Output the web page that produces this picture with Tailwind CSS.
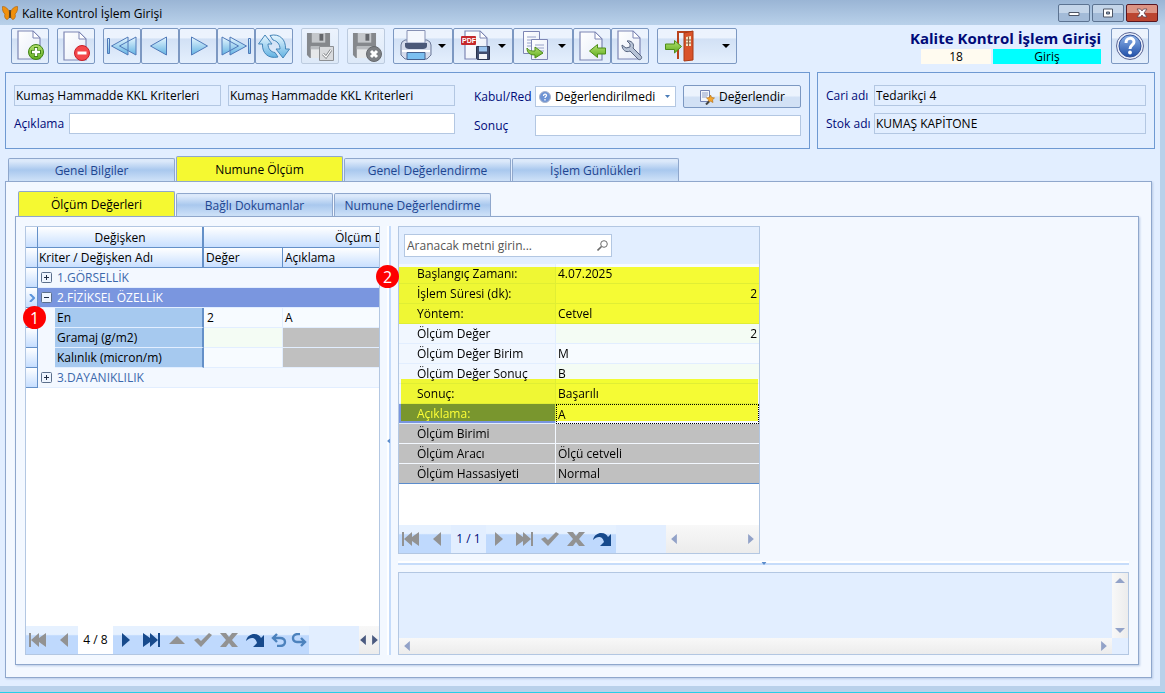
<!DOCTYPE html>
<html lang="tr">
<head>
    <meta charset="UTF-8">
    <meta name="viewport" content="width=device-width, initial-scale=1.0">
    <title>Kalite Kontrol İşlem Girişi</title>
    <script src="https://cdn.jsdelivr.net/npm/@tailwindcss/browser@4"></script>
</head>
<body class="flex min-h-screen flex-col bg-[#e2eeff] font-['Open_Sans','Noto_Sans',sans-serif] text-xs text-black">

    <!-- shared icon parts -->
    <svg class="absolute h-0 w-0" aria-hidden="true">
        <defs>
            <linearGradient id="blue" x1="0" y1="0" x2="0" y2="1"><stop offset="0" stop-color="#e8f7ff"/><stop offset="1" stop-color="#62b2e2"/></linearGradient>
            <linearGradient id="green" x1="0" y1="0" x2="0" y2="1"><stop offset="0" stop-color="#b4e070"/><stop offset="1" stop-color="#5fae20"/></linearGradient>
            <linearGradient id="paper" x1="0" y1="0" x2="1" y2="1"><stop offset="0" stop-color="#ffffff"/><stop offset="1" stop-color="#e6ecf8"/></linearGradient>
            <linearGradient id="help" x1="0" y1="0" x2="0" y2="1"><stop offset="0" stop-color="#8fb4ea"/><stop offset="1" stop-color="#1f4fa8"/></linearGradient>
            <symbol id="doc" viewBox="0 0 24 30"><path d="M1 1h15l7 7v21H1z" fill="url(#paper)" stroke="#7d86b4" stroke-width="1.2"/><path d="M16 1v7h7z" fill="#fff" stroke="#7d86b4"/></symbol>
            <symbol id="floppy" viewBox="0 0 26 28"><path d="M1 1h24v26H4l-3-3z" fill="#85888c"/><path d="M6 1h14v10H6z" fill="#c4c7cb"/><path d="M14 2h4v7h-4z" fill="#63666b"/><path d="M5 15h16v12H5z" fill="#e6e8ea"/><path d="M5 15h16v3H5z" fill="#b9bcc0"/></symbol>
            <symbol id="first" viewBox="0 0 18 14"><path d="M0 0h2v14H0zM10 0v5l7-5v14l-7-5v5L2 7z"/></symbol>
            <symbol id="last" viewBox="0 0 18 14"><path d="M18 0h-2v14h2zM8 0v5L1 0v14l7-5v5l8-7z"/></symbol>
            <symbol id="prev" viewBox="0 0 8 14"><path d="M8 0v14L0 7z"/></symbol>
            <symbol id="next" viewBox="0 0 8 14"><path d="M0 0v14l8-7z"/></symbol>
            <symbol id="up" viewBox="0 0 16 8"><path d="M8 0l8 8H0z"/></symbol>
            <symbol id="check" viewBox="0 0 18 14"><path d="M0 7l4-2 3 3 8-8 3 2L7 14z"/></symbol>
            <symbol id="cross" viewBox="0 0 18 14"><path d="M0 0h6l3 4 3-4h6l-6 7 6 7h-6l-3-4-3 4H0l6-7z"/></symbol>
            <symbol id="jump" viewBox="0 0 18 13"><path d="M0 7C1 2 5 0 8 0c4 0 6 2 7 4l3-3v12H7l4-4C10 5 8 4 6 4 4 4 2 5 0 7z"/></symbol>
            <symbol id="undo" viewBox="0 0 16 14"><path d="M6 1L2 5l4 4M2 5h7c3 0 5 1 5 4s-2 4-5 4H6" fill="none" stroke-width="2.4"/></symbol>
            <symbol id="redo" viewBox="0 0 16 14"><path d="M10 5l4 4-4 4M14 9H6C3 9 2 7 2 5s2-4 5-4h2" fill="none" stroke-width="2.4"/></symbol>
        </defs>
    </svg>

    <!-- title bar -->
    <header class="flex h-[25px] items-center gap-1 bg-linear-to-b from-[#9ab5d5] to-[#b9d1ea] pr-[7px] pl-[2px]">
        <svg class="h-4 w-4" viewBox="0 0 16 16"><path d="M7.500 8C7 4 3 1 .5 1.500 0 4 1 8 3 9c-1 2 0 5 2 5.500 2 0 2.500-4 2.500-6.500zM8.500 8C9 4 13 1 15.500 1.500 16 4 15 8 13 9c1 2 0 5-2 5.500-2 0-2.500-4-2.500-6.500z" fill="#f0900c" stroke="#a85c08" stroke-width=".6"/><path d="M8 5v8" stroke="#3c2608" stroke-width="1.400"/></svg>
        <h1 class="flex-1 pt-[2px]">Kalite Kontrol İşlem Girişi</h1>
        <div class="flex gap-[2px]">
            <button aria-label="Simge durumuna küçült" class="flex h-[18px] w-8 items-center justify-center rounded-xs border border-[#5c7391] bg-linear-to-b from-[#c4d5e9] from-50% to-[#a3bbd8] to-50%"><svg class="h-3 w-3" viewBox="0 0 12 12"><path d="M1 5.500h10v3H1z" fill="#fff" stroke="#4d5565"/></svg></button>
            <button aria-label="Ekranı kapla" class="flex h-[18px] w-8 items-center justify-center rounded-xs border border-[#5c7391] bg-linear-to-b from-[#c4d5e9] from-50% to-[#a3bbd8] to-50%"><svg class="h-3 w-3" viewBox="0 0 12 12"><path d="M1.500 2h9v8h-9z" fill="#fff" stroke="#4d5565"/><path d="M4.500 5h3v2h-3z" fill="#8ea6c5" stroke="#4d5565"/></svg></button>
            <button aria-label="Kapat" class="flex h-[18px] w-8 items-center justify-center rounded-xs border border-[#5a1620] bg-linear-to-b from-[#dc9484] from-50% to-[#bb4530] to-50%"><svg class="h-3 w-3" viewBox="0 0 12 12"><path d="M1 2h3.500L6 4l1.500-2H11L8 6l3 4H7.500L6 8l-1.500 2H1l3-4z" fill="#fff" stroke="#5c4450" stroke-width=".8"/></svg></button>
        </div>
    </header>

    <div class="flex flex-1 flex-col border-r-[5px] border-b-[6px] border-[#b9d1ea]">
        <!-- toolbar -->
        <div class="flex items-start justify-between pt-[3px] pr-[11px] pl-[11px]">
            <div class="flex gap-2">
                <button aria-label="Yeni" class="h-9 w-[38px] rounded-xs border border-[#7c98c2] bg-linear-to-b from-[#ecf3fd] from-25% via-[#d2e1f5] via-30% to-[#e4effd]">
                    <svg class="h-[34px] w-9" viewBox="1 1 36 34"><use href="#doc" x="6" y="2" width="24" height="30"/><circle cx="25" cy="24" r="7.500" fill="url(#green)" stroke="#3f8214"/><path d="M25 19v10M20 24h10" stroke="#3f8214" stroke-width="4"/><path d="M25 20v8M21 24h8" stroke="#fff" stroke-width="2.400"/></svg>
                </button>
                <button aria-label="Sil" class="h-9 w-[38px] rounded-xs border border-[#7c98c2] bg-linear-to-b from-[#ecf3fd] from-25% via-[#d2e1f5] via-30% to-[#e4effd]">
                    <svg class="h-[34px] w-9" viewBox="1 1 36 34"><use href="#doc" x="6" y="3" width="24" height="30"/><circle cx="25" cy="25" r="7.500" fill="#f4474b" stroke="#c81e26"/><path d="M20.500 25h9" stroke="#fff" stroke-width="3"/></svg>
                </button>
                <div class="flex">
                    <button aria-label="İlk kayıt" class="h-9 w-[38px] rounded-xs border border-[#7c98c2] bg-linear-to-b from-[#ecf3fd] from-25% via-[#d2e1f5] via-30% to-[#e4effd]">
                        <svg class="h-[34px] w-9" viewBox="1 1 36 34" fill="url(#blue)" stroke="#4f79b8"><path d="M4.500 10.500h2v15h-2zM25 9v18L8.500 18zM33 9v18L16.500 18z"/></svg>
                    </button>
                    <button aria-label="Önceki kayıt" class="h-9 w-[38px] rounded-xs border border-[#7c98c2] bg-linear-to-b from-[#ecf3fd] from-25% via-[#d2e1f5] via-30% to-[#e4effd]">
                        <svg class="h-[34px] w-9" viewBox="1 1 36 34" fill="url(#blue)" stroke="#4f79b8"><path d="M25.500 9v18L9.500 18z"/></svg>
                    </button>
                    <button aria-label="Sonraki kayıt" class="h-9 w-[38px] rounded-xs border border-[#7c98c2] bg-linear-to-b from-[#ecf3fd] from-25% via-[#d2e1f5] via-30% to-[#e4effd]">
                        <svg class="h-[34px] w-9" viewBox="1 1 36 34" fill="url(#blue)" stroke="#4f79b8"><path d="M12.500 9v18l16-9z"/></svg>
                    </button>
                    <button aria-label="Son kayıt" class="h-9 w-[38px] rounded-xs border border-[#7c98c2] bg-linear-to-b from-[#ecf3fd] from-25% via-[#d2e1f5] via-30% to-[#e4effd]">
                        <svg class="h-[34px] w-9" viewBox="1 1 36 34" fill="url(#blue)" stroke="#4f79b8"><path d="M31.500 10.500h2v15h-2zM5 9v18l16.500-9zM13 9v18l16.500-9z"/></svg>
                    </button>
                    <button aria-label="Yenile" class="h-9 w-[38px] rounded-xs border border-[#7c98c2] bg-linear-to-b from-[#ecf3fd] from-25% via-[#d2e1f5] via-30% to-[#e4effd]">
                        <svg class="h-[34px] w-9" viewBox="1 1 36 34" fill="url(#blue)" stroke="#4585b8"><path d="M10 7l7 9h-4c0 5 3 8 7 8.500l3 4.500C13 31 7 25 7.500 16H3.500z"/><path d="M28 30l-7-9h4c0-5-3-8-7-9l-3-4.500C25 5 31 12 30.500 21h4z"/></svg>
                    </button>
                </div>
                <button aria-label="Kaydet" disabled class="h-9 w-[38px] rounded-xs border border-[#bccbdf] bg-linear-to-b from-[#ecf3fd] to-[#dde9f8]">
                    <svg class="h-[34px] w-9" viewBox="1 1 36 34"><use href="#floppy" x="5" y="4" width="25" height="27"/><path d="M18.500 18.500h14v14h-14z" fill="#d9dbde" stroke="#8d9094"/><path d="M22 26l3 3 5-7" fill="none" stroke="#777a7e" stroke-width="2.600"/><path d="M22 26l3 3 5-7" fill="none" stroke="#fff" stroke-width="1.200"/></svg>
                </button>
                <button aria-label="Vazgeç" disabled class="h-9 w-[38px] rounded-xs border border-[#bccbdf] bg-linear-to-b from-[#ecf3fd] to-[#dde9f8]">
                    <svg class="h-[34px] w-9" viewBox="1 1 36 34"><use href="#floppy" x="5" y="4" width="25" height="27"/><circle cx="27" cy="26" r="7.500" fill="#7d8084" stroke="#66696d"/><path d="M24 23l6 6M30 23l-6 6" stroke="#fff" stroke-width="3"/></svg>
                </button>
                <div class="flex">
                    <button aria-label="Yazdır" class="h-9 w-[60px] rounded-xs border border-[#7c98c2] bg-linear-to-b from-[#ecf3fd] from-25% via-[#d2e1f5] via-30% to-[#e4effd]">
                        <svg class="h-[34px] w-[58px]" viewBox="1 1 58 34"><path d="M9 14l3-2h22l3 2 1 3v10l-4 4H12l-4-4V17z" fill="#d5dcec" stroke="#6b7898"/><path d="M14 2.500h18V15H14z" fill="#f4f7fd" stroke="#8791b4"/><path d="M12 15h22v3c0 2-2 3-4 3H16c-2 0-4-1-4-3z" fill="#4b5878"/><path d="M9 23h28" stroke="#fff" stroke-width="2"/><path d="M14 24.500h18v7H14z" fill="#7cc0f0" stroke="#44618f"/><path d="M45 16h8l-4 4z"/></svg>
                    </button>
                    <button aria-label="PDF kaydet" class="h-9 w-[60px] rounded-xs border border-[#7c98c2] bg-linear-to-b from-[#ecf3fd] from-25% via-[#d2e1f5] via-30% to-[#e4effd]">
                        <svg class="h-[34px] w-[58px]" viewBox="1 1 58 34"><use href="#doc" x="11" y="2" width="24" height="30"/><rect x="8" y="8" width="15" height="9" rx="1" fill="#c4272c"/><text x="9" y="15" font-size="7" font-weight="700" fill="#fff" font-family="Liberation Sans">PDF</text><path d="M23.500 18.500h13v13h-12l-1-1z" fill="#3f4c6e" stroke="#28324e"/><path d="M26 18.500h8v5h-8z" fill="#9bc4ee"/><path d="M26 26h8v5h-8z" fill="#f2f4f8"/><path d="M45 16h8l-4 4z"/></svg>
                    </button>
                    <button aria-label="Kopyala" class="h-9 w-[60px] rounded-xs border border-[#7c98c2] bg-linear-to-b from-[#ecf3fd] from-25% via-[#d2e1f5] via-30% to-[#e4effd]">
                        <svg class="h-[34px] w-[58px]" viewBox="1 1 58 34"><path d="M10.500 3.500h16v22h-16z" fill="url(#paper)" stroke="#7d86b4"/><path d="M14 9h9M14 12h9M14 15h6M14 18h5" stroke="#98a2c8"/><path d="M18.500 11.500h16v20h-16z" fill="url(#paper)" stroke="#7d86b4"/><path d="M22 17h9M22 20h9M26 23h5" stroke="#98a2c8"/><path d="M14 20c2 3 5 3 8 3v-4l8 6-8 5v-3c-5 0-8-2-8-7z" fill="url(#green)" stroke="#4d8c18"/><path d="M45 16h8l-4 4z"/></svg>
                    </button>
                    <button aria-label="İçeri al" class="h-9 w-[38px] rounded-xs border border-[#7c98c2] bg-linear-to-b from-[#ecf3fd] from-25% via-[#d2e1f5] via-30% to-[#e4effd]">
                        <svg class="h-[34px] w-9" viewBox="1 1 36 34"><use href="#doc" x="6" y="3" width="24" height="30"/><path d="M16.500 23l8-6.500V20h8v6h-8v3.500z" fill="url(#green)" stroke="#4d8c18"/></svg>
                    </button>
                    <button aria-label="Ayarlar" class="h-9 w-[38px] rounded-xs border border-[#7c98c2] bg-linear-to-b from-[#ecf3fd] from-25% via-[#d2e1f5] via-30% to-[#e4effd]">
                        <svg class="h-[34px] w-9" viewBox="1 1 36 34"><use href="#doc" x="6" y="2" width="24" height="30"/><path d="M16 13c4-1 8 3 6 7l8 8c2 2-1 5-3 3l-8-8c-4 2-8-1-8-6l4 3 4-1v-3z" fill="#b7c3d6" stroke="#56637e"/></svg>
                    </button>
                </div>
                <button aria-label="Çıkış" class="h-9 w-[80px] rounded-xs border border-[#7c98c2] bg-linear-to-b from-[#ecf3fd] from-25% via-[#d2e1f5] via-30% to-[#e4effd]">
                    <svg class="h-[34px] w-[78px]" viewBox="1 1 78 34"><path d="M21 31V4h14" fill="none" stroke="#b8421c" stroke-width="2"/><path d="M27 5l9-2v29l-9 1z" fill="#d9532a" stroke="#a93a14"/><path d="M29 9l5-1v10h-5z" fill="#f4e3c4"/><path d="M31.500 8.500V18M29 12h5M29 15h5" stroke="#8d5a3a"/><path d="M24.500 18.500l-7-6v3.500h-9v5.500h9V25z" fill="url(#green)" stroke="#4d8c18"/><path d="M65 16h8l-4 4z"/></svg>
                </button>
            </div>
            <div class="flex gap-[10px]">
                <div class="flex flex-col items-end">
                    <h2 class="text-[15px] leading-[21px] font-bold text-[#000a78]">Kalite Kontrol İşlem Girişi</h2>
                    <div class="flex gap-[2px] text-center leading-[15px]">
                        <span class="w-[70px] bg-[#fffbf0]">18</span>
                        <span class="w-[108px] bg-[#00ffff]">Giriş</span>
                    </div>
                </div>
                <button aria-label="Yardım" class="h-9 w-[38px] rounded-xs border border-[#7c98c2] bg-linear-to-b from-[#ecf3fd] from-25% via-[#d2e1f5] via-30% to-[#e4effd]">
                    <svg class="h-[34px] w-9" viewBox="1 1 36 34"><circle cx="19" cy="18" r="13.500" fill="#e9eefa" stroke="#5c6796"/><circle cx="19" cy="18" r="11" fill="url(#help)" stroke="#33539c"/><path d="M15 15c0-6 8-6 8-1 0 3-4 3-4 7" fill="none" stroke="#fff" stroke-width="3"/><circle cx="19" cy="24.500" r="1.900" fill="#fff"/></svg>
                </button>
            </div>
        </div>

        <!-- record summary -->
        <div class="flex gap-[7px] pt-2 pr-[5px] pl-[5px]">
            <section class="flex h-[77px] flex-[787] items-start gap-[19px] border border-[#6e99d2] pt-3 pr-2 pl-2">
                <div class="flex flex-[441] flex-col gap-[7px]">
                    <div class="flex gap-[7px]">
                        <input aria-label="Kriter kodu" readonly value="Kumaş Hammadde KKL Kriterleri" class="h-[21px] w-0 flex-[203] border border-[#b3c7e2] px-[1px]">
                        <input aria-label="Kriter adı" readonly value="Kumaş Hammadde KKL Kriterleri" class="h-[21px] w-0 flex-[223] border border-[#b3c7e2] px-[1px]">
                    </div>
                    <div class="flex items-center">
                        <label for="aciklama" class="w-[55px] text-[#000a78]">Açıklama</label>
                        <input id="aciklama" class="h-[21px] w-0 flex-1 border border-[#b3c7e2] bg-white px-[1px]">
                    </div>
                </div>
                <div class="flex flex-[327] flex-col gap-[7px]">
                    <div class="flex items-center">
                        <label for="kabul" class="w-[61px] text-[#000a78]">Kabul/Red</label>
                        <div class="relative mr-[7px] flex-1">
                            <select id="kabul" class="block h-[21px] w-full appearance-none border border-[#b3c7e2] bg-white pl-[19px]">
                                <option>Değerlendirilmedi</option>
                            </select>
                            <svg class="pointer-events-none absolute top-[5px] left-1 h-3 w-3" viewBox="0 0 12 12"><circle cx="6" cy="6" r="5.500" fill="#6d93d4" stroke="#a9b4cc"/><path d="M4.500 5c0-2.500 3-2.500 3-.5 0 1-1.500 1-1.500 2.500M6 8v1.500" fill="none" stroke="#fff" stroke-width="1.300"/></svg>
                            <svg class="pointer-events-none absolute top-[9px] right-[6px] h-[3px] w-[5px]" viewBox="0 0 5 3"><path d="M0 0h5L2.500 3z" fill="#4a7cb8"/></svg>
                        </div>
                        <button class="flex h-[23px] w-[118px] items-center justify-center gap-1 rounded-xs border border-[#7c98c2] bg-linear-to-b from-[#ecf3fd] from-45% to-[#d2e1f5] to-55%">
                            <svg class="h-4 w-4" viewBox="0 0 16 16"><path d="M1.500 1.500h9v11h-9z" fill="#f3f6fd" stroke="#7584b4"/><path d="M3 4h6M3 6h6M3 8h5" stroke="#90a0c8"/><path d="M11.500 6l1.200 2.500 2.800.4-2 1.900.5 2.700-2.500-1.300L9 13.500l.5-2.700-2-1.900 2.800-.4z" fill="#f4a52c" stroke="#b06a10" stroke-width=".6"/><path d="M7 15.500l3-3" stroke="#444" stroke-width="2"/></svg>
                            Değerlendir
                        </button>
                    </div>
                    <div class="flex items-center">
                        <label for="sonuc" class="w-[61px] text-[#000a78]">Sonuç</label>
                        <input id="sonuc" class="h-[21px] w-0 flex-1 border border-[#b3c7e2] bg-white px-[1px]">
                    </div>
                </div>
            </section>
            <section class="flex h-[77px] flex-[320] flex-col gap-[7px] border border-[#6e99d2] pt-3 pr-2 pl-2">
                <div class="flex items-center">
                    <label for="cari" class="w-12 text-[#000a78]">Cari adı</label>
                    <input id="cari" readonly value="Tedarikçi 4" class="h-[21px] w-0 flex-1 border border-[#b3c7e2] px-[1px]">
                </div>
                <div class="flex items-center">
                    <label for="stok" class="w-12 text-[#000a78]">Stok adı</label>
                    <input id="stok" readonly value="KUMAŞ KAPİTONE" class="h-[21px] w-0 flex-1 border border-[#b3c7e2] px-[1px]">
                </div>
            </section>
        </div>

        <!-- outer tabs -->
        <div class="flex flex-1 flex-col pt-[7px] pr-2 pb-2 pl-[5px]">
            <div role="tablist" class="flex items-end gap-[1px] pl-[3px] text-[#1e4590]">
                <button role="tab" class="h-[23px] w-[167px] rounded-t-xs border border-b-0 border-[#8fa7cc] bg-linear-to-b from-[#dce9fa] from-10% via-[#a9c8ee] via-50% to-[#cfe2f8] pt-[2px]">Genel Bilgiler</button>
                <button role="tab" aria-selected="true" class="h-[25px] w-[167px] rounded-t-xs border border-b-0 border-[#8fa7cc] bg-[#f5f931] pt-[2px] text-black">Numune Ölçüm</button>
                <button role="tab" class="h-[23px] w-[167px] rounded-t-xs border border-b-0 border-[#8fa7cc] bg-linear-to-b from-[#dce9fa] from-10% via-[#a9c8ee] via-50% to-[#cfe2f8] pt-[2px]">Genel Değerlendirme</button>
                <button role="tab" class="h-[23px] w-[167px] rounded-t-xs border border-b-0 border-[#8fa7cc] bg-linear-to-b from-[#dce9fa] from-10% via-[#a9c8ee] via-50% to-[#cfe2f8] pt-[2px]">İşlem Günlükleri</button>
            </div>
            <div class="flex flex-1 flex-col border border-[#8fa7cc] bg-[#f3f8ff] pt-[9px] pr-3 pb-3 pl-[9px] shadow-[1px_1px_2px_#b9cbe6]">
                <!-- inner tabs -->
                <div role="tablist" class="flex items-end gap-[1px] pl-[3px] text-[#1e4590]">
                    <button role="tab" aria-selected="true" class="h-[25px] w-[157px] rounded-t-xs border border-b-0 border-[#8fa7cc] bg-[#f5f931] pt-[2px] text-black">Ölçüm Değerleri</button>
                    <button role="tab" class="h-[23px] w-[157px] rounded-t-xs border border-b-0 border-[#8fa7cc] bg-linear-to-b from-[#dce9fa] from-10% via-[#a9c8ee] via-50% to-[#cfe2f8] pt-[2px]">Bağlı Dokumanlar</button>
                    <button role="tab" class="h-[23px] w-[157px] rounded-t-xs border border-b-0 border-[#8fa7cc] bg-linear-to-b from-[#dce9fa] from-10% via-[#a9c8ee] via-50% to-[#cfe2f8] pt-[2px]">Numune Değerlendirme</button>
                </div>
                <div class="flex flex-1 border border-[#8fa7cc] bg-[#f3f8ff] p-[9px] shadow-[1px_1px_2px_#b9cbe6]">

                    <!-- criteria grid -->
                    <div class="relative flex w-[355px] flex-col border border-[#b3c7e2] bg-white">
                        <div class="flex-1 overflow-hidden">
                            <table class="w-[527px] table-fixed border-separate border-spacing-0 text-left leading-[19px]">
                                <colgroup>
                                    <col class="w-3"><col class="w-[17px]"><col class="w-[149px]"><col class="w-[79px]"><col class="w-[270px]">
                                </colgroup>
                                <thead>
                                    <tr class="bg-linear-to-b from-white to-[#c6deff]">
                                        <th class="h-[21px] border-r border-b border-[#6490c8]"></th>
                                        <th colspan="2" class="border-r-2 border-b border-[#6490c8] text-center font-normal">Değişken</th>
                                        <th colspan="2" class="border-b border-[#6490c8] pl-1 text-center font-normal">Ölçüm Değerleri</th>
                                    </tr>
                                    <tr class="bg-linear-to-b from-white to-[#c6deff]">
                                        <th class="h-5 border-r border-b border-[#6490c8]"></th>
                                        <th colspan="2" class="border-r-2 border-b border-[#6490c8] pl-[1px] font-normal">Kriter / Değişken Adı</th>
                                        <th class="border-r border-b border-[#6490c8] pl-[2px] font-normal">Değer</th>
                                        <th class="border-b border-[#6490c8] pl-[2px] font-normal">Açıklama</th>
                                    </tr>
                                </thead>
                                <tbody>
                                    <tr>
                                        <td class="h-5 border-r border-b border-[#6490c8] bg-linear-to-b from-white to-[#c6deff]"></td>
                                        <td colspan="4" class="border-b border-[#e2eeff] bg-[#f3f8ff] text-[#3c68ac]"><span class="flex items-center gap-[5px] pl-[3px]"><svg class="h-[11px] w-[11px]" viewBox="0 0 11 11"><rect x=".5" y=".5" width="10" height="10" rx="1" fill="#eef5ff" stroke="#5b6f8c"/><path d="M3 5.500h5M5.500 3v5" stroke="#222f46"/></svg>1.GÖRSELLİK</span></td>
                                    </tr>
                                    <tr>
                                        <td class="h-5 border-r border-b border-[#6490c8] bg-linear-to-b from-white to-[#c6deff]"><svg class="ml-[3px] h-2 w-[6px]" viewBox="0 0 6 8"><path d="M1 0l4 4-4 4" fill="none" stroke="#5b94dc" stroke-width="2"/></svg></td>
                                        <td colspan="4" class="border-b border-[#e2eeff] bg-[#7a96df] text-white"><span class="flex items-center gap-[5px] pl-[3px]"><svg class="h-[11px] w-[11px]" viewBox="0 0 11 11"><rect x=".5" y=".5" width="10" height="10" rx="1" fill="#eef5ff" stroke="#5b6f8c"/><path d="M3 5.500h5" stroke="#222f46"/></svg>2.FİZİKSEL ÖZELLİK</span></td>
                                    </tr>
                                    <tr>
                                        <td class="h-5 border-r border-b border-[#6490c8] bg-linear-to-b from-white to-[#c6deff]"></td>
                                        <td class="bg-[#f3f8ff]"></td>
                                        <td class="border-r-2 border-b border-r-[#6490c8] border-b-[#e2eeff] bg-[#a6c9ef] pl-[2px]">En</td>
                                        <td class="border-r border-b border-[#e2eeff] bg-[#f7fbff] pl-[3px]">2</td>
                                        <td class="border-b border-[#e2eeff] bg-[#f7fbff] pl-[2px]">A</td>
                                    </tr>
                                    <tr>
                                        <td class="h-5 border-r border-b border-[#6490c8] bg-linear-to-b from-white to-[#c6deff]"></td>
                                        <td class="bg-[#f3f8ff]"></td>
                                        <td class="border-r-2 border-b border-r-[#6490c8] border-b-[#e2eeff] bg-[#a6c9ef] pl-[2px]">Gramaj (g/m2)</td>
                                        <td class="border-r border-b border-[#e2eeff] bg-[#f4fcf4]"></td>
                                        <td class="border-b border-[#e2eeff] bg-[#c0c0c0]"></td>
                                    </tr>
                                    <tr>
                                        <td class="h-5 border-r border-b border-[#6490c8] bg-linear-to-b from-white to-[#c6deff]"></td>
                                        <td class="bg-[#f3f8ff]"></td>
                                        <td class="border-r-2 border-b border-r-[#6490c8] border-b-[#e2eeff] bg-[#a6c9ef] pl-[2px]">Kalınlık (micron/m)</td>
                                        <td class="border-r border-b border-[#e2eeff] bg-[#f7fbff]"></td>
                                        <td class="border-b border-[#e2eeff] bg-[#c0c0c0]"></td>
                                    </tr>
                                    <tr>
                                        <td class="h-5 border-r border-b border-[#6490c8] bg-linear-to-b from-white to-[#c6deff]"></td>
                                        <td colspan="4" class="border-b border-[#e2eeff] bg-[#f3f8ff] text-[#3c68ac]"><span class="flex items-center gap-[5px] pl-[3px]"><svg class="h-[11px] w-[11px]" viewBox="0 0 11 11"><rect x=".5" y=".5" width="10" height="10" rx="1" fill="#eef5ff" stroke="#5b6f8c"/><path d="M3 5.500h5M5.500 3v5" stroke="#222f46"/></svg>3.DAYANIKLILIK</span></td>
                                    </tr>
                                </tbody>
                            </table>
                        </div>
                        <div class="flex h-7 bg-[#e2eeff] fill-[#929292]">
                            <div class="flex bg-linear-to-b from-[#e6f1ff] from-30% to-[#bfd9fd] to-35%">
                                <button aria-label="İlk" class="flex w-[26px] items-center justify-center pr-[2px]"><svg class="h-[14px] w-[18px]"><use href="#first"/></svg></button>
                                <button aria-label="Önceki" class="flex w-[26px] items-center justify-center pr-[2px]"><svg class="h-[14px] w-2"><use href="#prev"/></svg></button>
                            </div>
                            <span class="w-[35px] bg-white text-center leading-7">4 / 8</span>
                            <div class="flex bg-linear-to-b from-[#e6f1ff] from-30% to-[#bfd9fd] to-35%">
                                <button aria-label="Sonraki" class="flex w-[26px] items-center justify-center fill-[#174a8c]"><svg class="h-[14px] w-2"><use href="#next"/></svg></button>
                                <button aria-label="Son" class="flex w-[26px] items-center justify-center fill-[#174a8c] pr-[2px]"><svg class="h-[14px] w-[18px]"><use href="#last"/></svg></button>
                                <button aria-label="Düzenle" class="flex w-[26px] items-center justify-center pr-[2px]"><svg class="h-2 w-4"><use href="#up"/></svg></button>
                                <button aria-label="Onayla" class="flex w-[26px] items-center justify-center pr-[2px]"><svg class="h-[14px] w-[18px]"><use href="#check"/></svg></button>
                                <button aria-label="İptal" class="flex w-[26px] items-center justify-center pr-[2px]"><svg class="h-[14px] w-[18px]"><use href="#cross"/></svg></button>
                                <button aria-label="Tazele" class="flex w-[26px] items-center justify-center fill-[#174a8c] pr-[2px]"><svg class="h-[13px] w-[18px]"><use href="#jump"/></svg></button>
                                <button aria-label="Geri al" class="flex w-5 items-center justify-center stroke-[#4c82bd]"><svg class="h-[14px] w-4"><use href="#undo"/></svg></button>
                                <button aria-label="Yinele" class="flex w-5 items-center justify-center stroke-[#4c82bd]"><svg class="h-[14px] w-4"><use href="#redo"/></svg></button>
                            </div>
                            <div class="ml-auto flex w-5 items-center justify-between bg-linear-to-b from-[#f8f8f8] to-[#ececec] fill-[#4a5a80] px-[1px]">
                                <svg class="h-[10px] w-[6px]"><use href="#prev"/></svg>
                                <svg class="h-[10px] w-[6px]"><use href="#next"/></svg>
                            </div>
                        </div>
                        <span class="absolute top-[79px] -left-[3px] flex h-[23px] w-[23px] items-center justify-center rounded-full bg-[#fe0000] text-base text-white">1</span>
                    </div>

                    <!-- vertical splitter -->
                    <div class="relative mr-[7px] ml-[7px] w-1 border-r-2 border-l-2 border-l-white border-r-[#c6dcfa]">
                        <svg class="absolute top-1/2 -left-[2px] h-[5px] w-[3px] -translate-y-1/2 fill-[#5b8ccc]"><use href="#prev"/></svg>
                    </div>

                    <!-- detail pane -->
                    <div class="relative flex flex-1 flex-col">
                        <div class="flex w-[362px] flex-1 flex-col border border-[#b3c7e2] bg-white">
                            <div class="h-[37px] bg-[#e2eeff] pt-[7px] pl-[5px]">
                                <div class="relative w-52">
                                    <input type="search" aria-label="Ara" placeholder="Aranacak metni girin..." class="block h-[23px] w-full border border-[#b3c7e2] bg-white px-[2px] placeholder:text-[#555]">
                                    <svg class="absolute top-[6px] right-1 h-[11px] w-[11px]" viewBox="0 0 11 11" fill="none" stroke="#6c6c6c"><circle cx="7" cy="4" r="3.300"/><path d="M4.500 6.500l-4 4" stroke-width="1.600"/></svg>
                                </div>
                            </div>
                            <div class="relative isolate border-b border-[#5b8ccc]">
                                <table class="w-full table-fixed border-separate border-spacing-0 text-left leading-[19px]">
                                    <colgroup><col class="w-[157px]"><col></colgroup>
                                    <tbody>
                                        <tr><th class="h-5 border-r border-b border-[#e2eeff] bg-[#f1f7ff] pl-[18px] font-normal">Başlangıç Zamanı:</th><td class="border-b border-[#e2eeff] bg-[#f7fbff] px-[2px]">4.07.2025</td></tr>
                                        <tr><th class="h-5 border-r border-b border-[#e2eeff] bg-[#f1f7ff] pl-[18px] font-normal">İşlem Süresi (dk):</th><td class="border-b border-[#e2eeff] bg-[#f7fbff] px-[2px] text-right">2</td></tr>
                                        <tr><th class="h-5 border-r border-b border-[#e2eeff] bg-[#f1f7ff] pl-[18px] font-normal">Yöntem:</th><td class="border-b border-[#e2eeff] bg-[#f7fbff] px-[2px]">Cetvel</td></tr>
                                        <tr><th class="h-5 border-r border-b border-[#e2eeff] bg-[#f1f7ff] pl-[18px] font-normal">Ölçüm Değer</th><td class="border-b border-[#e2eeff] bg-[#f4fcf4] px-[2px] text-right">2</td></tr>
                                        <tr><th class="h-5 border-r border-b border-[#e2eeff] bg-[#f1f7ff] pl-[18px] font-normal">Ölçüm Değer Birim</th><td class="border-b border-[#e2eeff] bg-[#f7fbff] px-[2px]">M</td></tr>
                                        <tr><th class="h-5 border-r border-b border-[#e2eeff] bg-[#f1f7ff] pl-[18px] font-normal">Ölçüm Değer Sonuç</th><td class="border-b border-[#e2eeff] bg-[#f4fcf4] px-[2px]">B</td></tr>
                                        <tr><th class="h-5 border-r border-b border-[#e2eeff] bg-[#f1f7ff] pl-[18px] font-normal">Sonuç:</th><td class="border-b border-[#e2eeff] bg-[#f7fbff] px-[2px]">Başarılı</td></tr>
                                        <tr><th class="h-5 border-r border-b border-[#e2eeff] bg-[#7a96df] pl-[18px] font-normal text-white">Açıklama:</th><td class="bg-[#f7fbff] px-[2px] outline-1 -outline-offset-1 outline-black outline-dotted">A</td></tr>
                                        <tr><th class="h-5 border-r border-b border-[#f3f8ff] bg-[#c0c0c0] pl-[18px] font-normal">Ölçüm Birimi</th><td class="border-b border-[#f3f8ff] bg-[#c0c0c0] px-[2px]"></td></tr>
                                        <tr><th class="h-5 border-r border-b border-[#f3f8ff] bg-[#c0c0c0] pl-[18px] font-normal">Ölçüm Aracı</th><td class="border-b border-[#f3f8ff] bg-[#c0c0c0] px-[2px]">Ölçü cetveli</td></tr>
                                        <tr><th class="h-[19px] border-r border-[#f3f8ff] bg-[#c0c0c0] pl-[18px] font-normal">Ölçüm Hassasiyeti</th><td class="bg-[#c0c0c0] px-[2px]">Normal</td></tr>
                                    </tbody>
                                </table>
                                <!-- highlighter strokes -->
                                <div class="absolute inset-x-0 top-[3px] h-[57px] bg-[#fdff34] mix-blend-multiply"></div>
                                <div class="absolute top-[115px] right-[1px] left-[2px] h-[42px] bg-[#fdff34] mix-blend-multiply"></div>
                            </div>
                            <div class="mt-auto flex h-7 bg-[#e2eeff] fill-[#929292]">
                                <div class="flex bg-linear-to-b from-[#e6f1ff] from-30% to-[#bfd9fd] to-35%">
                                    <button aria-label="İlk" class="flex w-[26px] items-center justify-center pr-[2px]"><svg class="h-[14px] w-[18px]"><use href="#first"/></svg></button>
                                    <button aria-label="Önceki" class="flex w-[26px] items-center justify-center pr-[2px]"><svg class="h-[14px] w-2"><use href="#prev"/></svg></button>
                                </div>
                                <span class="w-[35px] text-center leading-7 text-[#000a78]">1 / 1</span>
                                <div class="flex bg-linear-to-b from-[#e6f1ff] from-30% to-[#bfd9fd] to-35%">
                                    <button aria-label="Sonraki" class="flex w-[26px] items-center justify-center"><svg class="h-[14px] w-2"><use href="#next"/></svg></button>
                                    <button aria-label="Son" class="flex w-[26px] items-center justify-center pr-[2px]"><svg class="h-[14px] w-[18px]"><use href="#last"/></svg></button>
                                    <button aria-label="Onayla" class="flex w-[26px] items-center justify-center pr-[2px]"><svg class="h-[14px] w-[18px]"><use href="#check"/></svg></button>
                                    <button aria-label="İptal" class="flex w-[26px] items-center justify-center pr-[2px]"><svg class="h-[14px] w-[18px]"><use href="#cross"/></svg></button>
                                    <button aria-label="Tazele" class="flex w-[26px] items-center justify-center fill-[#174a8c] pr-[2px]"><svg class="h-[13px] w-[18px]"><use href="#jump"/></svg></button>
                                </div>
                                <div class="ml-auto flex w-[93px] items-center justify-between bg-linear-to-b from-[#f8f8f8] to-[#ececec] fill-[#92a2c8] px-[5px]">
                                    <svg class="h-[10px] w-[6px]"><use href="#prev"/></svg>
                                    <svg class="h-[10px] w-[6px]"><use href="#next"/></svg>
                                </div>
                            </div>
                        </div>
                        <span class="absolute top-[39px] -left-[22px] flex h-[23px] w-[23px] items-center justify-center rounded-full bg-[#fe0000] text-base text-white">2</span>

                        <!-- horizontal splitter -->
                        <div class="relative mt-[7px] mb-[7px] h-1 border-t-2 border-b-2 border-t-white border-b-[#c6dcfa]">
                            <svg class="absolute -top-[1px] left-1/2 h-[3px] w-[5px] -translate-x-1/2" viewBox="0 0 5 3"><path d="M0 0h5L2.500 3z" fill="#5b8ccc"/></svg>
                        </div>

                        <div class="flex h-[83px] flex-col border border-[#b3c7e2] bg-[#e2eeff]">
                            <div class="flex flex-1 justify-end">
                                <div class="flex w-4 flex-col items-center justify-between bg-linear-to-r from-[#f8f8f8] to-[#ececec] py-[5px]">
                                    <svg class="h-[5px] w-[10px]" viewBox="0 0 10 5"><path d="M0 5h10L5 0z" fill="#92a2c8"/></svg>
                                    <svg class="h-[5px] w-[10px]" viewBox="0 0 10 5"><path d="M0 0h10L5 5z" fill="#92a2c8"/></svg>
                                </div>
                            </div>
                            <div class="mr-4 flex h-4 items-center justify-between bg-linear-to-b from-[#f8f8f8] to-[#ececec] fill-[#92a2c8] px-[5px]">
                                <svg class="h-[10px] w-[6px]"><use href="#prev"/></svg>
                                <svg class="h-[10px] w-[6px]"><use href="#next"/></svg>
                            </div>
                        </div>
                    </div>
                </div>
            </div>
        </div>
    </div>
    <div class="h-[1px] bg-[#25cfe8]"></div>
</body>
</html>
